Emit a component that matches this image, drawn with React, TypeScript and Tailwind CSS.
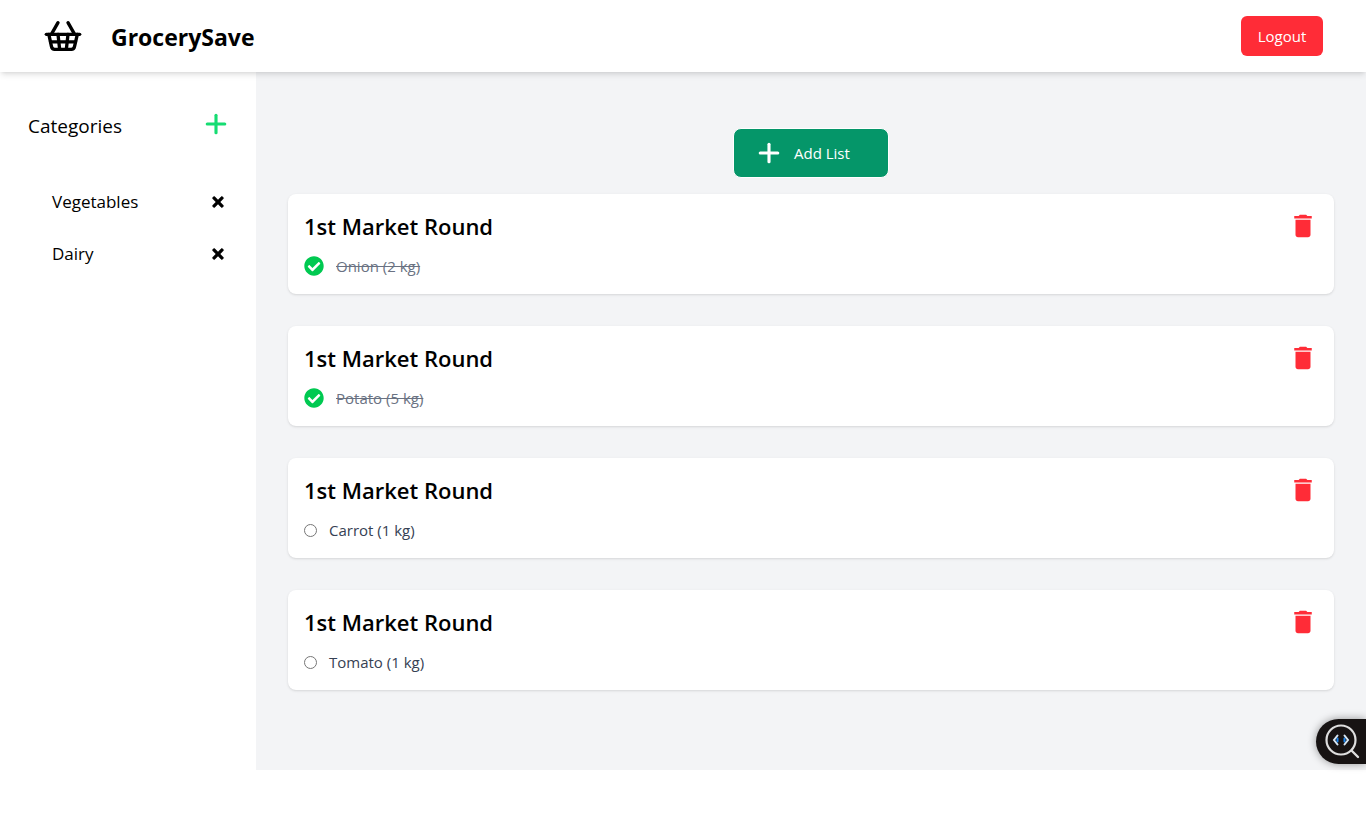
import { useState } from 'react';
import { Plus, ShoppingBasket } from 'lucide-react';
import { FaCheckCircle, FaTimes } from 'react-icons/fa';
import { MdDelete } from 'react-icons/md';

interface GroceryList {
  id: number;
  title: string;
  item: string;
  done: boolean;
}

const initialLists: GroceryList[] = [
  { id: 1, title: '1st Market Round', item: 'Onion (2 kg)', done: true },
  { id: 2, title: '1st Market Round', item: 'Potato (5 kg)', done: true },
  { id: 3, title: '1st Market Round', item: 'Carrot (1 kg)', done: false },
  { id: 4, title: '1st Market Round', item: 'Tomato (1 kg)', done: false },
];

function Header() {
  return (
    <header className="relative z-10 flex h-[72px] items-center justify-between bg-white px-[43px] shadow-md">
      <div className="flex items-center gap-7">
        <ShoppingBasket size={40} />
        <h1 className="pt-0.5 text-[23px] leading-8 font-bold">GrocerySave</h1>
      </div>
      <button className="h-10 min-w-[82px] rounded-md bg-[#ff2c37] px-4 text-[15px] text-white hover:bg-red-600">
        Logout
      </button>
    </header>
  );
}

interface SidebarProps {
  categories: string[];
  onRemove: (name: string) => void;
}

function Sidebar({ categories, onRemove }: SidebarProps) {
  return (
    <aside className="w-64 shrink-0 bg-white px-7 pt-9">
      <div className="flex h-8 items-center justify-between">
        <h2 className="pt-1 text-[19px] leading-8">Categories</h2>
        <button aria-label="Add category" className="-mr-1 flex size-8 items-center justify-center text-[#16dc72]">
          <Plus size={30} strokeWidth={2.5} />
        </button>
      </div>
      <ul className="mt-9 pl-6">
        {categories.map((name) => (
          <li key={name} className="flex h-[52px] items-center justify-between">
            <span className="text-[17px] leading-7">{name}</span>
            <button aria-label={`Remove ${name}`} onClick={() => onRemove(name)} className="mr-0.5">
              <FaTimes size={16} stroke="currentColor" strokeWidth={16} />
            </button>
          </li>
        ))}
      </ul>
    </aside>
  );
}

interface ListCardProps {
  list: GroceryList;
  onToggle: (id: number) => void;
  onDelete: (id: number) => void;
}

function ListCard({ list, onToggle, onDelete }: ListCardProps) {
  return (
    <li className="flex h-[100px] items-start justify-between rounded-lg bg-white p-4 shadow-sm">
      <div>
        <h3 className="text-[22px] leading-8 font-semibold">{list.title}</h3>
        {list.done ? (
          <button onClick={() => onToggle(list.id)} className="mt-3 flex items-center gap-3">
            <FaCheckCircle size={20} className="text-[#00c951]" />
            <span className="text-[15px] leading-6 text-gray-500 line-through">{list.item}</span>
          </button>
        ) : (
          <label className="mt-3 flex items-center gap-3">
            <input type="radio" checked={false} onChange={() => onToggle(list.id)} className="size-[13px]" />
            <span className="text-[15px] leading-6 text-gray-700">{list.item}</span>
          </label>
        )}
      </div>
      <button aria-label={`Delete ${list.title}`} onClick={() => onDelete(list.id)} className="pt-px text-[#ff2c37]">
        <MdDelete size={30} />
      </button>
    </li>
  );
}

function InspectButton() {
  return (
    <button
      aria-label="Inspect"
      className="fixed top-[719px] right-0 z-20 h-[45px] w-[50px] rounded-l-full bg-[#171313] shadow-[0_0_8px_rgba(0,0,0,0.4)]"
    >
      <svg viewBox="0 0 50 45" className="h-[45px] w-[50px]" fill="none" strokeLinecap="round">
        <circle cx="25" cy="21" r="14.5" stroke="#dedede" strokeWidth="2.2" />
        <path d="M35.5 31.5l6.5 6.5" stroke="#dedede" strokeWidth="2.4" />
        <path d="M21.5 19.5v3M28.5 19.5v3" stroke="#1683f0" strokeWidth="2" />
        <path d="M21.5 16.5l-3.5 4.5 3.5 4.5M28.5 16.5l3.5 4.5-3.5 4.5" stroke="#d8e6f2" strokeWidth="2" />
      </svg>
    </button>
  );
}

export default function App() {
  const [categories, setCategories] = useState(['Vegetables', 'Dairy']);
  const [lists, setLists] = useState(initialLists);

  const toggleList = (id: number) =>
    setLists((prev) => prev.map((l) => (l.id === id ? { ...l, done: !l.done } : l)));

  return (
    <div className="bg-white font-['Segoe_UI','Open_Sans',sans-serif] text-black">
      <Header />
      <div className="flex">
        <Sidebar
          categories={categories}
          onRemove={(name) => setCategories((prev) => prev.filter((c) => c !== name))}
        />
        <main className="flex-1 bg-[#f3f4f6] px-8 pt-14 pb-20">
          <button className="mx-auto flex h-[50px] w-[156px] items-center gap-[10px] rounded-lg border border-white bg-[#059669] pl-5 text-[15px] text-white hover:bg-emerald-700">
            <Plus size={30} strokeWidth={2.5} />
            Add List
          </button>
          <ul className="mt-4 flex flex-col gap-8">
            {lists.map((list) => (
              <ListCard
                key={list.id}
                list={list}
                onToggle={toggleList}
                onDelete={(id) => setLists((prev) => prev.filter((l) => l.id !== id))}
              />
            ))}
          </ul>
        </main>
      </div>
      <InspectButton />
    </div>
  );
}
